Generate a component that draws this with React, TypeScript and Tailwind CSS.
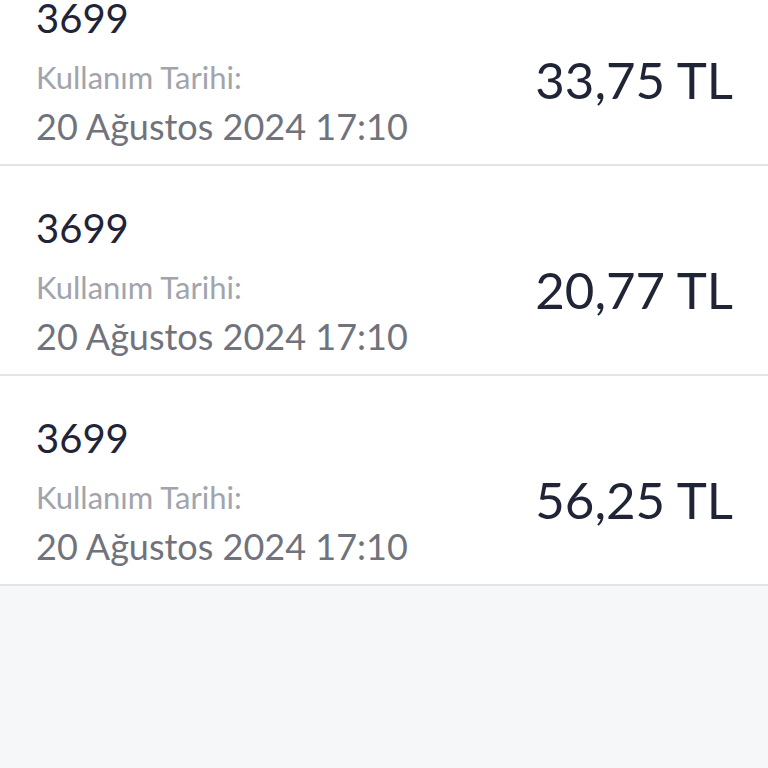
const items = [
  { code: "3699", date: "20 Ağustos 2024 17:10", amount: "33,75 TL" },
  { code: "3699", date: "20 Ağustos 2024 17:10", amount: "20,77 TL" },
  { code: "3699", date: "20 Ağustos 2024 17:10", amount: "56,25 TL" },
];

export default function App() {
  return (
    <div className="min-h-[768px] bg-[#f6f7f9] overflow-hidden font-['Lato',sans-serif]">
      <div className="-mt-[44px] bg-white">
        {items.map((it, i) => (
          <div
            key={i}
            className="h-[210px] flex items-start justify-between border-b-2 border-[#e3e4e8] pl-[36px] pr-[35px] pt-[42px]"
          >
            <div className="flex flex-col">
              <div className="text-[40px] leading-none text-[#1f2436]">{it.code}</div>
              <div className="mt-[24px] text-[31px] leading-none text-[#a1a4ac]">Kullanım Tarihi:</div>
              <div className="mt-[15px] text-[36px] leading-none text-[#70737c]">{it.date}</div>
            </div>
            <div className="mt-[56px] text-[51px] leading-none text-[#1f2436]">{it.amount}</div>
          </div>
        ))}
      </div>
    </div>
  );
}
